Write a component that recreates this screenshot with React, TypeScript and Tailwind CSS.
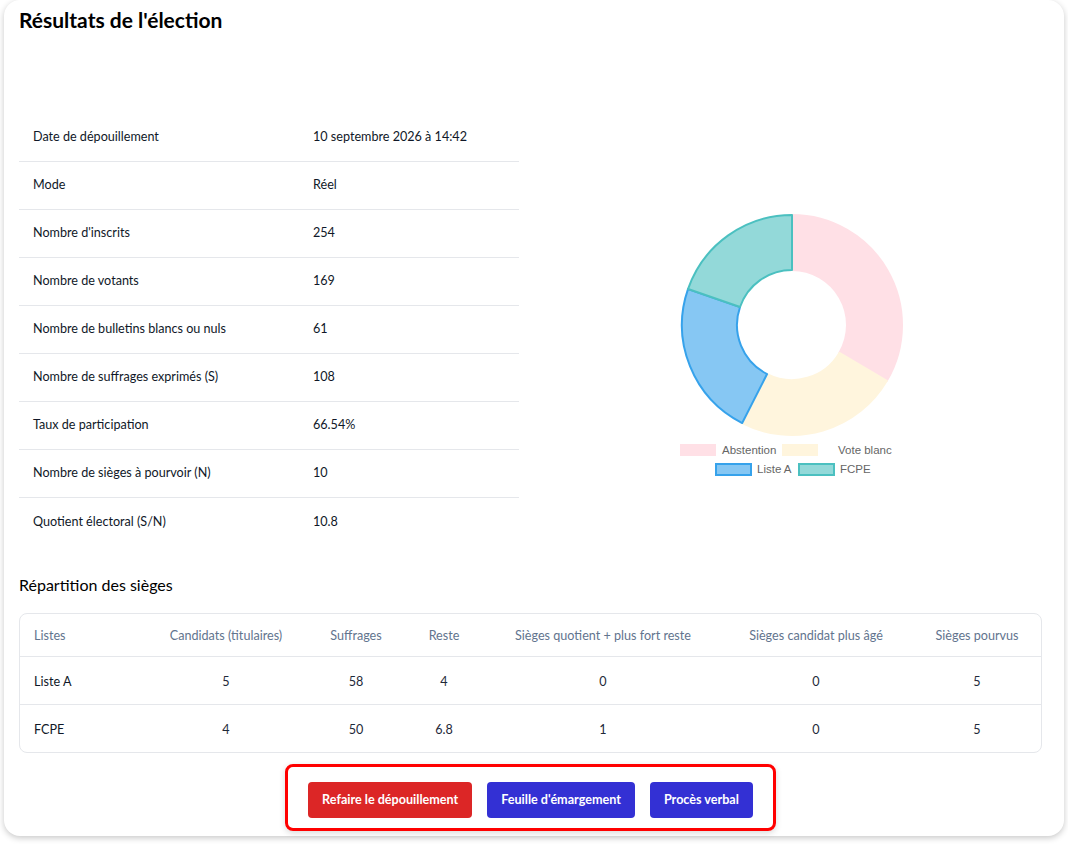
import React from 'react';

const infoRows: [string, string][] = [
  ['Date de dépouillement', '10 septembre 2026 à 14:42'],
  ['Mode', 'Réel'],
  ["Nombre d'inscrits", '254'],
  ['Nombre de votants', '169'],
  ['Nombre de bulletins blancs ou nuls', '61'],
  ['Nombre de suffrages exprimés (S)', '108'],
  ['Taux de participation', '66.54%'],
  ['Nombre de sièges à pourvoir (N)', '10'],
  ['Quotient électoral (S/N)', '10.8'],
];

const seatRows = [
  ['Liste A', '5', '58', '4', '0', '0', '5'],
  ['FCPE', '4', '50', '6.8', '1', '0', '5'],
];

const headers = [
  'Listes',
  'Candidats (titulaires)',
  'Suffrages',
  'Reste',
  'Sièges quotient + plus fort reste',
  'Sièges candidat plus âgé',
  'Sièges pourvus',
];

const slices = [
  { label: 'Abstention', value: 85, fill: '#ffe0e6', stroke: '#ffe0e6' },
  { label: 'Vote blanc', value: 61, fill: '#fff5dd', stroke: '#fff5dd' },
  { label: 'Liste A', value: 58, fill: '#86c7f3', stroke: '#36a2eb' },
  { label: 'FCPE', value: 50, fill: '#93d9d9', stroke: '#4bc0c0' },
];

const CX = 130;
const CY = 120;
const R = 110;
const RI = 55;

function pt(r: number, deg: number) {
  const a = (deg * Math.PI) / 180;
  return [CX + r * Math.sin(a), CY - r * Math.cos(a)];
}

function arc(start: number, end: number) {
  const large = end - start > 180 ? 1 : 0;
  const [x1, y1] = pt(R, start);
  const [x2, y2] = pt(R, end);
  const [x3, y3] = pt(RI, end);
  const [x4, y4] = pt(RI, start);
  return `M${x1} ${y1} A${R} ${R} 0 ${large} 1 ${x2} ${y2} L${x3} ${y3} A${RI} ${RI} 0 ${large} 0 ${x4} ${y4} Z`;
}

const DonutChart: React.FC = () => {
  const total = slices.reduce((s, x) => s + x.value, 0);
  let acc = 0;
  const paths = slices.map((s) => {
    const start = (acc / total) * 360;
    acc += s.value;
    const end = (acc / total) * 360;
    return { ...s, d: arc(start, end) };
  });

  return (
    <svg width="260" height="280" viewBox="0 0 260 280" style={{ fontFamily: '"Liberation Sans", Arial, sans-serif' }}>
      {paths.map((p) => (
        <path key={p.label} d={p.d} fill={p.fill} stroke={p.stroke} strokeWidth={2} strokeLinejoin="round" />
      ))}
      {/* legend */}
      <rect x="18" y="239" width="36" height="12" fill="#ffe0e6" />
      <text x="60" y="249" fontSize="11.5" fill="#666">Abstention</text>
      <rect x="120" y="239" width="36" height="12" fill="#fff5dd" />
      <text x="176" y="249" fontSize="11.5" fill="#666">Vote blanc</text>
      <rect x="54" y="259" width="35" height="11" fill="#86c7f3" stroke="#36a2eb" strokeWidth={2} />
      <text x="95" y="268" fontSize="11.5" fill="#666">Liste A</text>
      <rect x="137" y="259" width="35" height="11" fill="#93d9d9" stroke="#4bc0c0" strokeWidth={2} />
      <text x="178" y="268" fontSize="11.5" fill="#666">FCPE</text>
    </svg>
  );
};

export default function App() {
  return (
    <div className="min-h-screen bg-white px-1 pb-2 font-['Lato','Noto_Sans',sans-serif] text-gray-900">
      <div className="w-[1060px] rounded-2xl bg-white pl-[15px] pr-[22px] pt-[6px] pb-[5px] shadow-[0_2px_6px_rgba(0,0,0,0.22)]">
        <h1 className="text-[21px] font-bold leading-7 text-black">Résultats de l'élection</h1>

        <div className="mt-[80px] flex">
          <div className="w-[500px]">
            {infoRows.map(([k, v], i) => (
              <div
                key={k}
                className={`flex h-12 items-center text-[12.6px] ${i < infoRows.length - 1 ? 'border-b border-gray-200' : ''}`}
              >
                <div className="w-[280px] px-[14px]">{k}</div>
                <div className="px-[14px]">{v}</div>
              </div>
            ))}
          </div>
          <div className="flex-1 pl-[143px] pt-[91px]">
            <DonutChart />
          </div>
        </div>

        <h2 className="mt-[27px] text-[16px] leading-6 text-black">Répartition des sièges</h2>

        <div className="mt-4 overflow-hidden rounded-lg border border-gray-200 text-[12.6px]">
          <div className="grid h-[42px] grid-cols-[121px_170px_90px_86px_232px_194px_128px] items-center pt-[2px] text-slate-500">
            {headers.map((h, i) => (
              <div key={h} className={i === 0 ? 'pl-[14px]' : 'text-center'}>
                {h}
              </div>
            ))}
          </div>
          {seatRows.map((row) => (
            <div
              key={row[0]}
              className="grid h-12 grid-cols-[121px_170px_90px_86px_232px_194px_128px] items-center border-t border-gray-200 pt-[3px] text-gray-800"
            >
              {row.map((c, i) => (
                <div key={i} className={i === 0 ? 'pl-[14px] text-gray-900' : 'text-center'}>
                  {c}
                </div>
              ))}
            </div>
          ))}
        </div>

        <div className="mt-[11px] flex justify-center">
          <div className="flex gap-[15px] rounded-lg border-[3px] border-[#ff0000] px-5 pt-[15px] pb-[10px] shadow-[0_2px_6px_rgba(0,0,0,0.15)]">
            <button type="button" className="h-9 rounded bg-[#dc2626] px-[14px] text-[12.6px] font-bold text-white">
              Refaire le dépouillement
            </button>
            <button type="button" className="h-9 rounded bg-[#3330d4] px-[14px] text-[12.6px] font-bold text-white">
              Feuille d'émargement
            </button>
            <button type="button" className="h-9 rounded bg-[#3330d4] px-[14px] text-[12.6px] font-bold text-white">
              Procès verbal
            </button>
          </div>
        </div>
      </div>
    </div>
  );
}
